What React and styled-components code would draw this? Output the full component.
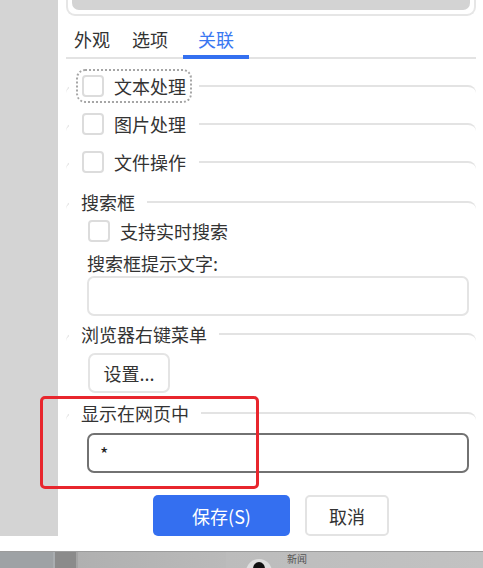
import React from "react";
import styled, { createGlobalStyle } from "styled-components";

const GlobalStyle = createGlobalStyle`
  html, body {
    margin: 0;
    padding: 0;
    background: #fff;
  }
  body {
    font-family: "Noto Sans CJK SC", "Noto Sans", sans-serif;
    color: #333;
    overflow: hidden;
  }
  * {
    box-sizing: border-box;
  }
`;

const Page = styled.div`
  width: 483px;
  height: 568px;
  display: flex;
  flex-direction: column;
  overflow: hidden;
`;

const Window = styled.div`
  position: relative;
  flex: none;
  background: #fff;
  padding-bottom: 15px;
`;

const Body = styled.div`
  display: flex;
  align-items: stretch;
`;

const Sidebar = styled.div`
  flex: none;
  width: 58px;
  background: #d4d4d4;
`;

const Content = styled.div`
  flex: 1;
  display: flex;
  flex-direction: column;
  padding: 0 7px 0 8px;
`;

const PreviewFrame = styled.div`
  height: 16px;
  border: 2px solid #e6e6e6;
  border-top: none;
  border-radius: 0 0 9px 9px;
  padding: 0 4px 4px;
`;

const PreviewFill = styled.div`
  height: 10px;
  background: #d3d3d3;
  border-radius: 0 0 7px 7px;
`;

const TabBar = styled.div`
  display: flex;
  border-bottom: 2px solid #e3e3e3;
`;

const Tab = styled.div`
  padding: 10px 15px 3px;
  font-size: 18px;
  line-height: 26px;
  color: ${(p) => (p.$active ? "#3a78f2" : "#333")};
  border-bottom: 4px solid ${(p) => (p.$active ? "#3470f0" : "transparent")};
  margin-bottom: -2px;

  &:first-child {
    padding-left: 8px;
    padding-right: 7px;
  }
`;

const Group = styled.fieldset`
  margin: ${(p) => p.$top || 5}px 0 0;
  padding: 0;
  min-width: 0;
  border: none;
  border-top: 2px solid #e3e3e3;
  border-radius: 8px 8px 0 0;
`;

const CheckLegend = styled.legend`
  margin: 0 0 11px 3px;
  padding: 0 13px;
`;

const TextLegend = styled.legend`
  margin: 0 0 0 3px;
  padding: 0 12px;
  font-size: 18px;
  line-height: 26px;
`;

const CheckLabel = styled.label`
  display: flex;
  align-items: center;
  gap: 10px;
  height: 22px;
  font-size: 18px;
  line-height: 22px;
  border-radius: 3px;
  outline: ${(p) => (p.$focused ? "2px dotted #a6a6a6" : "none")};
  outline-offset: 4px;
`;

const Box = styled.span`
  flex: none;
  width: 22px;
  height: 22px;
  border: 2px solid #dcdcdc;
  border-radius: 4px;
  background: #fff;
`;

const GroupBody = styled.div`
  padding: 0 7px 0 21px;
`;

const CheckRow = styled(CheckLabel)`
  margin: 5px 0 0 1px;
`;

const FieldLabel = styled.div`
  margin-top: 8px;
  font-size: 18px;
  line-height: 26px;
`;

const TextInput = styled.input`
  display: block;
  width: 100%;
  height: 40px;
  margin-top: ${(p) => p.$gap || 0}px;
  padding: 0 11px;
  border: 2px solid ${(p) => (p.$dark ? "#727272" : "#e4e4e4")};
  border-radius: 7px;
  background: #fff;
  font-family: inherit;
  font-size: 18px;
  color: #222;
  outline: none;
`;

const SmallButton = styled.button`
  display: block;
  width: 82px;
  height: 40px;
  margin: 6px 0 2px 1px;
  border: 2px solid #e4e4e4;
  border-radius: 7px;
  background: #fff;
  font-family: inherit;
  font-size: 18px;
  color: #333;
`;

const Actions = styled.div`
  display: flex;
  justify-content: center;
  gap: 15px;
  margin-top: 22px;
`;

const ActionButton = styled.button`
  height: 41px;
  width: ${(p) => (p.$primary ? 137 : 84)}px;
  border: ${(p) => (p.$primary ? "none" : "2px solid #e3e3e3")};
  border-radius: 5px;
  background: ${(p) => (p.$primary ? "#346ff0" : "#fff")};
  color: ${(p) => (p.$primary ? "#fff" : "#333")};
  font-family: inherit;
  font-size: 18px;
`;

const Annotation = styled.div`
  position: absolute;
  left: 40px;
  top: 396px;
  width: 219px;
  height: 93px;
  border: 3px solid #e8262d;
  border-radius: 5px;
  pointer-events: none;
`;

const Taskbar = styled.div`
  flex: 1;
  display: flex;
  border-top: 1px solid #9c9c9c;
  overflow: hidden;
`;

const Segment = styled.div`
  flex: ${(p) => (p.$grow ? 1 : "none")};
  width: ${(p) => (p.$w ? `${p.$w}px` : "auto")};
  background: ${(p) => p.$bg};
  border-right: ${(p) => (p.$edge ? `2px solid ${p.$edge}` : "none")};
  display: flex;
  align-items: flex-start;
  gap: 14px;
  padding-left: ${(p) => p.$pad || 0}px;
`;

const TaskIcon = styled.svg`
  flex: none;
  margin-top: 6px;
`;

const TaskText = styled.span`
  margin-top: 1px;
  font-size: 10px;
  line-height: 12px;
  color: #555;
  white-space: nowrap;
`;

function CheckGroup({ label, focused, top }) {
  return (
    <Group $top={top}>
      <CheckLegend>
        <CheckLabel $focused={focused}>
          <Box />
          {label}
        </CheckLabel>
      </CheckLegend>
    </Group>
  );
}

export default function App() {
  return (
    <Page>
      <GlobalStyle />
      <Window>
        <Body>
          <Sidebar />
          <Content>
            <PreviewFrame>
              <PreviewFill />
            </PreviewFrame>

            <TabBar>
              <Tab>外观</Tab>
              <Tab>选项</Tab>
              <Tab $active>关联</Tab>
            </TabBar>

            <CheckGroup label="文本处理" focused top={16} />
            <CheckGroup label="图片处理" />
            <CheckGroup label="文件操作" />

            <Group>
              <TextLegend>搜索框</TextLegend>
              <GroupBody>
                <CheckRow>
                  <Box />
                  支持实时搜索
                </CheckRow>
                <FieldLabel>搜索框提示文字:</FieldLabel>
                <TextInput readOnly defaultValue="" />
              </GroupBody>
            </Group>

            <Group>
              <TextLegend>浏览器右键菜单</TextLegend>
              <GroupBody>
                <SmallButton>设置...</SmallButton>
              </GroupBody>
            </Group>

            <Group>
              <TextLegend>显示在网页中</TextLegend>
              <GroupBody>
                <TextInput $dark $gap={7} readOnly defaultValue="*" />
              </GroupBody>
            </Group>

            <Actions>
              <ActionButton $primary>保存(S)</ActionButton>
              <ActionButton>取消</ActionButton>
            </Actions>
          </Content>
        </Body>
        <Annotation />
      </Window>

      <Taskbar>
        <Segment $w={55} $bg="#9ea2a5" $edge="#a9adb0" />
        <Segment $w={23} $bg="#8b8b8b" $edge="#a4a4a4" />
        <Segment $w={148} $bg="linear-gradient(90deg, #b0b0b0, #bababa)" />
        <Segment $grow $pad={19} $bg="linear-gradient(90deg, #bcbcbc, #c2c2c2)">
          <TaskIcon width="28" height="28" viewBox="0 0 28 28">
            <circle cx="14" cy="14" r="13" fill="#dedede" />
            <ellipse cx="14" cy="11" rx="6" ry="7" fill="#111" />
          </TaskIcon>
          <TaskText>新闻</TaskText>
        </Segment>
      </Taskbar>
    </Page>
  );
}
